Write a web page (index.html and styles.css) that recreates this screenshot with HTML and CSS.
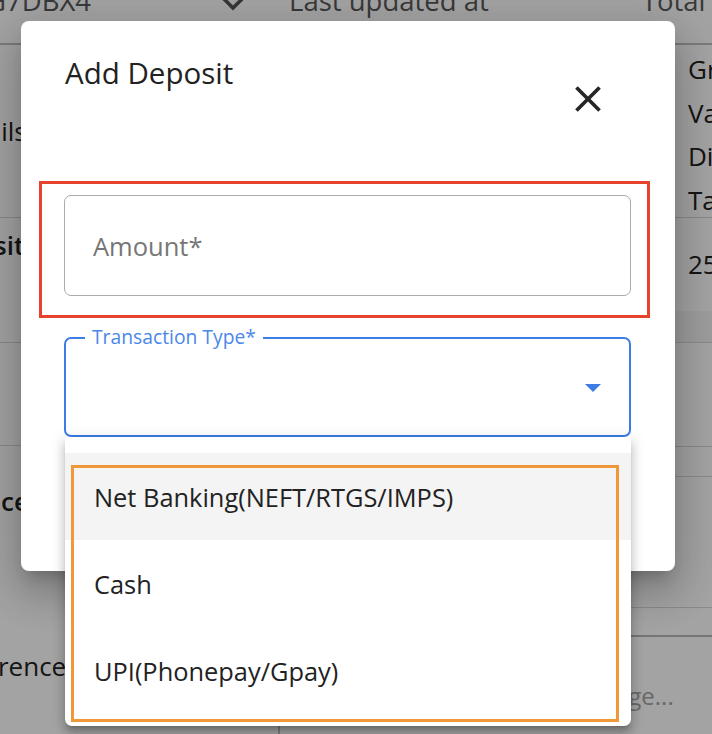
FILE: index.html
```html
<!DOCTYPE html>
<html lang="en">
<head>
<meta charset="utf-8">
<title>Add Deposit</title>
<link rel="stylesheet" href="styles.css">
</head>
<body>
<div class="page">
  <header class="topbar">
    <span class="tb-id">G7DBX4</span>
    <svg class="tb-check" width="30" height="22" viewBox="0 0 30 22"><path d="M3 5 L13 15 L28 0" fill="none" stroke="#555" stroke-width="3.6"/></svg>
    <span class="tb-updated">Last updated at</span>
    <span class="tb-total">Total</span>
  </header>
  <div class="content">
    <div class="col-left">
      <div class="lrow lrow-1"><span class="ltext cut-details">Details</span></div>
      <div class="lrow lrow-2"><span class="ltext strong cut-deposit">Deposit</span></div>
      <div class="lrow lrow-3"></div>
      <div class="lrow lrow-4"><span class="ltext strong cut-balance">Balance</span></div>
      <div class="lrow lrow-5"><span class="ltext cut-reference">Reference</span></div>
    </div>
    <div class="col-mid"></div>
    <div class="col-right">
      <div class="rrow rrow-1">
        <span class="rtext">Gross</span>
        <span class="rtext">Value</span>
        <span class="rtext">Discount</span>
        <span class="rtext">Tax</span>
      </div>
      <div class="rrow rrow-2"><span class="rtext">2500</span></div>
      <div class="rrow rrow-3"></div>
      <div class="rrow rrow-4"></div>
      <div class="rrow rrow-5"></div>
      <div class="rrow rrow-6"></div>
      <div class="rrow rrow-7"><span class="placeholder-bg">Message...</span></div>
    </div>
  </div>
</div>

<div class="backdrop"></div>

<div class="modal">
  <div class="modal-head">
    <h2 class="modal-title">Add Deposit</h2>
    <svg class="close-icon" width="44" height="44" viewBox="0 0 24 24"><path d="M19 6.41 17.59 5 12 10.59 6.41 5 5 6.41 10.59 12 5 17.59 6.41 19 12 13.41 17.59 19 19 17.59 13.41 12z" fill="#262626"/></svg>
  </div>
  <div class="field field-amount">
    <span class="placeholder">Amount*</span>
  </div>
  <div class="field field-select">
    <span class="select-label">Transaction Type*</span>
    <span class="select-arrow"></span>
  </div>
</div>

<div class="menu">
  <div class="menu-item selected">Net Banking(NEFT/RTGS/IMPS)</div>
  <div class="menu-item">Cash</div>
  <div class="menu-item">UPI(Phonepay/Gpay)</div>
</div>

<div class="mark mark-red"></div>
<div class="mark mark-orange"></div>
</body>
</html>
```

FILE: styles.css
```css
html, body {
  margin: 0;
  padding: 0;
}
body {
  width: 712px;
  height: 734px;
  overflow: hidden;
  position: relative;
  background: #ffffff;
  font-family: "Open Sans", "Noto Sans", sans-serif;
  color: #222;
}

/* ---------- background page ---------- */
.page {
  width: 712px;
  height: 734px;
  overflow: hidden;
}
.topbar {
  height: 45px;
  box-sizing: border-box;
  border-bottom: 2px solid #c0c0c0;
  display: flex;
  align-items: flex-start;
  font-size: 27.5px;
  color: #5a5a5a;
  line-height: 30px;
  white-space: nowrap;
}
.topbar span { margin-top: -14px; }
.tb-id { margin-left: -14px; }
.tb-check { margin-left: 129px; margin-top: -7px; flex: none; }
.tb-updated { margin-left: 39px; }
.tb-total { margin-left: 153px; }

.content {
  display: flex;
  height: 689px;
}
.col-left {
  width: 280px;
  flex: none;
  border-right: 2px solid #c4c4c4;
  box-sizing: border-box;
  overflow: hidden;
}
.col-mid {
  width: 348px;
  flex: none;
}
.col-right {
  flex: 1;
  overflow: hidden;
}
.lrow {
  display: flex;
  align-items: center;
  white-space: nowrap;
  font-size: 26px;
  box-sizing: border-box;
}
.lrow-1 { height: 173px; border-bottom: 1px solid #d8d8d8; }
.lrow-2 { height: 125px; border-bottom: 1px solid #d8d8d8; align-items: flex-start; padding-top: 9px; }
.lrow-3 { height: 103px; border-bottom: 1px solid #d8d8d8; }
.lrow-4 { height: 110px; }
.lrow-5 { height: 180px; align-items: flex-start; padding-top: 92px; }
.ltext { color: #222; }
.strong { font-weight: 600; }
.cut-details { margin-left: -56px; }
.cut-deposit { margin-left: -72px; }
.cut-balance { margin-left: -70px; }
.cut-reference { margin-left: -56px; }

.rrow {
  box-sizing: border-box;
  white-space: nowrap;
  font-size: 26px;
}
.rrow-1 {
  height: 173px;
  border-bottom: 1px solid #d8d8d8;
  display: flex;
  flex-direction: column;
  padding: 3px 0 0 60px;
  line-height: 43.5px;
}
.rrow-2 {
  height: 125px;
  border-bottom: 1px solid #d8d8d8;
  padding: 28px 0 0 60px;
  background: linear-gradient(to bottom, transparent 75%, #f6f6f6 75%);
}
.rrow-3 { height: 104px; border-bottom: 1px solid #d8d8d8; }
.rrow-4 { height: 30px; border-bottom: 1px solid #d8d8d8; }
.rrow-5 { height: 131px; border-bottom: 1px solid #d8d8d8; }
.rrow-6 { height: 29px; border-bottom: 2px solid #b8b8b8; }
.rrow-7 { padding-top: 40px; }
.placeholder-bg {
  color: #a4a4a4;
  font-size: 24px;
  margin-left: -71px;
}

/* ---------- overlay ---------- */
.backdrop {
  position: absolute;
  inset: 0;
  background: rgba(0, 0, 0, 0.36);
}

/* ---------- modal ---------- */
.modal {
  position: absolute;
  left: 21px;
  top: 21px;
  width: 654px;
  height: 550px;
  box-sizing: border-box;
  padding: 33px 44px 0 43px;
  background: #fff;
  border-radius: 8px;
  box-shadow: 0 11px 15px -7px rgba(0,0,0,.2), 0 24px 38px 3px rgba(0,0,0,.14), 0 9px 46px 8px rgba(0,0,0,.12);
}
.modal-head {
  display: flex;
  justify-content: space-between;
  align-items: flex-start;
  height: 67px;
}
.modal-title {
  margin: 0 0 0 1px;
  font-size: 29.5px;
  line-height: 38px;
  font-weight: 500;
  color: #222;
}
.close-icon {
  margin-top: 23px;
  margin-right: 21px;
  flex: none;
}
.field {
  position: relative;
  box-sizing: border-box;
  height: 101px;
  border-radius: 7px;
  display: flex;
  align-items: center;
}
.field-amount {
  margin-top: 74px;
  border: 1px solid #ababab;
  padding-left: 28px;
}
.placeholder {
  font-size: 25.5px;
  color: #767676;
}
.field-select {
  margin-top: 41px;
  height: 100px;
  border: 2px solid #3c7de6;
  justify-content: flex-end;
  padding-right: 28px;
}
.select-label {
  position: absolute;
  left: 19px;
  top: -14px;
  padding: 0 7px;
  background: #fff;
  font-size: 19.3px;
  line-height: 24px;
  color: #4b87ea;
}
.select-arrow {
  width: 0;
  height: 0;
  border-left: 8.5px solid transparent;
  border-right: 8.5px solid transparent;
  border-top: 8.5px solid #3c7de6;
  margin-top: 1px;
}

/* ---------- dropdown menu ---------- */
.menu {
  position: absolute;
  left: 65px;
  top: 437px;
  width: 566px;
  height: 289px;
  box-sizing: border-box;
  padding-top: 16px;
  background: #fff;
  border-radius: 0 0 7px 7px;
  box-shadow: 0 5px 5px -3px rgba(0,0,0,.2), 0 8px 10px 1px rgba(0,0,0,.14), 0 3px 14px 2px rgba(0,0,0,.12);
}
.menu-item {
  height: 87px;
  display: flex;
  align-items: center;
  padding-left: 29px;
  font-size: 25.4px;
  color: #222;
}
.menu-item.selected {
  background: #f4f4f4;
}

/* ---------- annotation marks ---------- */
.mark {
  position: absolute;
  box-sizing: border-box;
  pointer-events: none;
}
.mark-red {
  left: 39px;
  top: 181px;
  width: 611px;
  height: 137px;
  border: 3px solid #e5432b;
}
.mark-orange {
  left: 71px;
  top: 465px;
  width: 548px;
  height: 257px;
  border: 3px solid #ef983a;
}
```
